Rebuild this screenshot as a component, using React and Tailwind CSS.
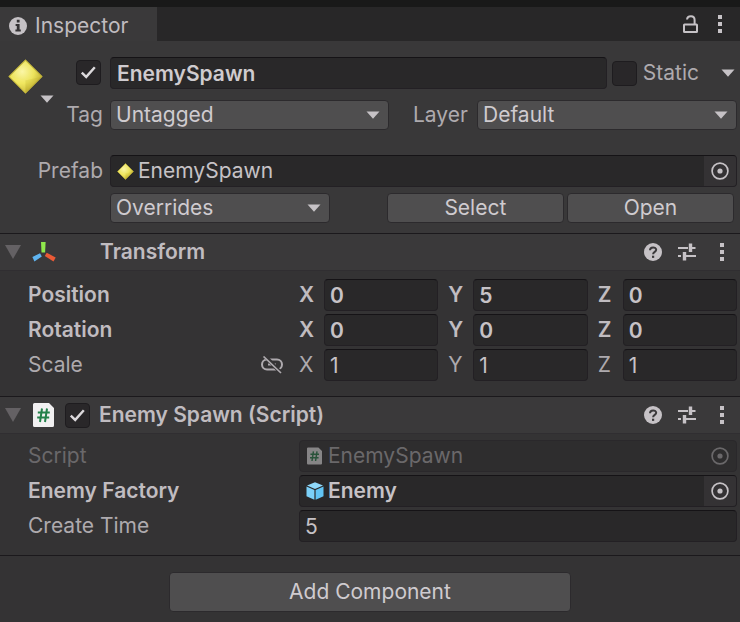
import { useId } from "react";

const fieldBox =
  "rounded-[4px] border border-[#232024] border-t-[#151316] bg-[#292829]";
const buttonBox = "rounded-[4px] border border-[#2c2a2d] bg-[#4f4e4f]";

function Caret({ className = "" }) {
  return (
    <svg viewBox="0 0 14 8" className={`h-2 w-3.5 shrink-0 ${className}`} aria-hidden="true">
      <path d="M0.5 0.5h13L7 7.8z" fill="#c6c2c6" />
    </svg>
  );
}

function CheckBox({ checked = false, label }) {
  return (
    <span className="grid size-[25px] shrink-0">
      <input
        type="checkbox"
        defaultChecked={checked}
        aria-label={label}
        className="peer col-start-1 row-start-1 size-[25px] appearance-none rounded-[4px] border border-[#1e1c1f] bg-[#292729]"
      />
      <svg
        viewBox="0 0 25 25"
        className="pointer-events-none invisible col-start-1 row-start-1 size-[25px] peer-checked:visible"
        aria-hidden="true"
      >
        <path d="M5.8 12.6l4.4 4.3L18.8 7.2" fill="none" stroke="#dcd9dc" strokeWidth="2.4" />
      </svg>
    </span>
  );
}

function Dropdown({ id, value, label, className = "" }) {
  return (
    <span className={`grid h-[30px] items-center ${className}`}>
      <select
        id={id}
        aria-label={label}
        className={`${buttonBox} col-start-1 row-start-1 h-[30px] w-full appearance-none pr-8 pl-[5px] text-[#cfcbcf]`}
      >
        <option>{value}</option>
      </select>
      <Caret className="pointer-events-none col-start-1 row-start-1 mr-[9px] justify-self-end" />
    </span>
  );
}

function Target() {
  return (
    <svg viewBox="0 0 18 18" className="size-[18px]" aria-hidden="true">
      <circle cx="9" cy="9" r="7.9" fill="none" stroke="currentColor" strokeWidth="1.7" />
      <circle cx="9" cy="9" r="2.6" fill="currentColor" />
    </svg>
  );
}

function ObjectField({ id, value, icon, bold = false, disabled = false }) {
  return (
    <div
      className={`flex h-8 min-w-0 flex-1 items-center rounded-[4px] border ${
        disabled
          ? "border-[#2a282b] bg-[#2e2d2e] text-[#6a686a]"
          : "border-[#232024] border-t-[#151316] bg-[#292829] text-[#c6c2c6]"
      }`}
    >
      {icon}
      <input
        id={id}
        readOnly
        disabled={disabled}
        value={value}
        className={`min-w-0 flex-1 bg-transparent pl-1 outline-none ${bold ? "font-semibold" : ""}`}
      />
      <button
        type="button"
        disabled={disabled}
        aria-label="Select object"
        className={`grid h-full w-8 place-items-center rounded-r-[3px] ${disabled ? "" : "bg-[#343234]"}`}
      >
        <Target />
      </button>
    </div>
  );
}

function Diamond({ className }) {
  const id = useId();
  return (
    <svg viewBox="0 0 34 34" className={className} aria-hidden="true">
      <defs>
        <radialGradient id={id} cx="0.4" cy="0.35" r="0.65">
          <stop offset="0" stopColor="#fbf6a6" />
          <stop offset="0.55" stopColor="#ece35c" />
          <stop offset="1" stopColor="#bfae30" />
        </radialGradient>
      </defs>
      <path d="M17 1L33 17L17 33L1 17z" fill={`url(#${id})`} stroke="#c7b93b" strokeWidth="1" />
      <path d="M1 17L17 21L17 33z" fill="#fff46c" opacity="0.25" />
      <path d="M17 21L33 17L17 33z" fill="#b5a31c" opacity="0.15" />
    </svg>
  );
}

function ScriptIcon({ className }) {
  return (
    <svg viewBox="0 0 21 24" className={className} aria-hidden="true">
      <path d="M1.5 0H16l5 5v17.5a1.5 1.5 0 0 1-1.5 1.5h-18A1.5 1.5 0 0 1 0 22.5v-21A1.5 1.5 0 0 1 1.5 0z" fill="#f1f0f1" />
      <path d="M9 5.5L7 19M14 5.5L12 19M4.800 9.5h12M4.200 14.500h12" fill="none" stroke="#23814a" strokeWidth="2" />
    </svg>
  );
}

function Cube() {
  return (
    <svg viewBox="0 0 18 18" className="ml-1.5 size-[18px] shrink-0" aria-hidden="true">
      <path d="M9 0.2L17 3.5L9 7L1 3.5z" fill="#8fd8fa" />
      <path d="M0.5 4.6L8.4 8.1V17.8L0.5 14.2z" fill="#7bd0f8" />
      <path d="M17.5 4.6L9.6 8.1V17.8L17.5 14.2z" fill="#62c4f4" />
    </svg>
  );
}

function Axes() {
  return (
    <svg viewBox="0 0 24 22" className="h-[22px] w-6 shrink-0" aria-hidden="true">
      <path d="M9 1h4.6l-.5 10.500h-3.600z" fill="#8fe84c" />
      <path d="M9.8 15.400L8 12.200L0.400 16l2 4.400z" fill="#5fb4f0" />
      <path d="M12.800 15l1.900-3.200L23.700 16.400l-2.200 4.200z" fill="#ea5a36" />
    </svg>
  );
}

function Dots() {
  return (
    <svg viewBox="0 0 4 18" className="h-[18px] w-1" aria-hidden="true">
      <path d="M0 0h4v4H0zM0 7h4v4H0zM0 14h4v4H0z" fill="#c6c2c6" />
    </svg>
  );
}

function HeaderTools() {
  return (
    <div className="ml-auto flex items-center pr-4">
      <button type="button" aria-label="Help" className="mr-4">
        <svg viewBox="0 0 18 18" className="size-[18px]" aria-hidden="true">
          <circle cx="9" cy="9" r="9" fill="#c6c2c6" />
          <path d="M6 7.2C6 3.5 12.2 3.6 12.2 6.8C12.2 8.9 9.1 8.8 9.1 11.2" fill="none" stroke="#3b393b" strokeWidth="2" />
          <path d="M8 12.7h2.2v2.2H8z" fill="#3b393b" />
        </svg>
      </button>
      <button type="button" aria-label="Presets" className="mr-6">
        <svg viewBox="0 0 18 18" className="size-[18px]" aria-hidden="true">
          <path d="M0 5h10M13 5h4.500M0 13h3M8 13h10" stroke="#c6c2c6" strokeWidth="2" />
          <path d="M12.500 0.5v8.500M6.500 9v8.500" stroke="#c6c2c6" strokeWidth="3.400" />
        </svg>
      </button>
      <button type="button" aria-label="More options">
        <Dots />
      </button>
    </div>
  );
}

function Foldout({ label }) {
  return (
    <button type="button" aria-label={label} className="ml-[5px] w-[27px] shrink-0">
      <svg viewBox="0 0 16 14" className="h-3.5 w-4" aria-hidden="true">
        <path d="M0 0h16L8 14z" fill="#646164" />
      </svg>
    </button>
  );
}

function VectorRow({ name, values, bold = false, link = false }) {
  return (
    <div
      role="group"
      aria-label={name}
      className={`flex h-8 items-center ${bold ? "font-semibold" : "text-[#aeaaae]"}`}
    >
      <div className="flex w-[271px] shrink-0 items-center justify-between pr-4">
        <span>{name}</span>
        {link && (
          <svg viewBox="0 0 22 18" className="h-[18px] w-[22px]" aria-hidden="true">
            <rect x="1" y="3.5" width="20" height="10" rx="5" fill="none" stroke="#aeaaae" strokeWidth="2" />
            <path d="M7 8.500h8" stroke="#aeaaae" strokeWidth="2" />
            <path d="M4.5 0.5L20 17" stroke="#343334" strokeWidth="4" />
            <path d="M2.5 0.5L20 17" stroke="#aeaaae" strokeWidth="1.7" />
          </svg>
        )}
      </div>
      <div className="grid flex-1 grid-cols-3 gap-2.5">
        {["X", "Y", "Z"].map((axis, i) => (
          <label key={axis} className="flex items-center">
            <span className="w-[25px] shrink-0">{axis}</span>
            <input
              defaultValue={values[i]}
              className={`${fieldBox} h-8 w-full min-w-0 pl-[5px] text-[#c6c2c6]`}
            />
          </label>
        ))}
      </div>
    </div>
  );
}

export default function App() {
  return (
    <div className="flex min-h-screen flex-col bg-[#343334] font-[Inter,'Liberation_Sans',sans-serif] text-[21px] leading-6 text-[#c0bcc0]">
      <div className="h-[7px] bg-[#191919]" />
      <header className="flex h-[34px] items-center bg-[#282728]">
        <h1 className="flex h-full w-[157px] items-center gap-2 bg-[#3a393a] pt-1 pl-[9px]">
          <svg viewBox="0 0 18 18" className="size-[18px]" aria-hidden="true">
            <circle cx="9" cy="9" r="9" fill="#c6c2c6" />
            <path d="M7.8 2.8h2.8v2.6H7.8zM6.6 7h4v5.6h1.2v2H6.4v-2h1.4V9H6.600z" fill="#343234" />
          </svg>
          Inspector
        </h1>
        <div className="ml-auto flex items-center gap-5 pr-[18px]">
          <button type="button" aria-label="Lock">
            <svg viewBox="0 0 15 18" className="h-[18px] w-[15px]" aria-hidden="true">
              <rect x="1" y="9.500" width="13" height="7.500" rx="0.5" fill="none" stroke="#c6c2c6" strokeWidth="2" />
              <path d="M4 4.5C4.5 0.2 11.6 0 11.6 5V9" fill="none" stroke="#c6c2c6" strokeWidth="2" />
            </svg>
          </button>
          <button type="button" aria-label="More options">
            <Dots />
          </button>
        </div>
      </header>

      <section className="flex bg-[#393839] pt-4 pb-2.5">
        <div className="flex w-[110px] shrink-0 flex-col">
          <div className="flex h-8 justify-between pr-[9px]">
            <div className="ml-2 flex pt-0.5">
              <Diamond className="size-[35px]" />
            </div>
            <div className="pt-[3px]">
              <CheckBox checked label="Active" />
            </div>
          </div>
          <div className="mt-2.5 flex h-8 items-center justify-between pr-[7px]">
            <Caret className="mb-8 ml-10" />
            <label htmlFor="tag" className="text-[#aeaaae]">Tag</label>
          </div>
          <label htmlFor="prefab" className="mt-6 flex h-8 items-center self-end pr-[7px] text-[#aeaaae]">
            Prefab
          </label>
        </div>
        <div className="flex min-w-0 flex-1 flex-col pr-[3px]">
          <div className="flex h-8 items-center pr-0.5">
            <input
              aria-label="Name"
              defaultValue="EnemySpawn"
              className={`${fieldBox} h-8 min-w-0 flex-1 pl-1.5 font-semibold text-[#cfcbcf]`}
            />
            <label className="ml-[5px] flex items-center gap-1.5 text-[#aeaaae]">
              <CheckBox label="Static" />
              <span>Static</span>
            </label>
            <button type="button" aria-label="Static flags" className="ml-[22px]">
              <Caret />
            </button>
          </div>
          <div className="mt-2.5 flex h-8 items-center">
            <Dropdown id="tag" value="Untagged" className="flex-[279]" />
            <label htmlFor="layer" className="ml-6 w-[64px] shrink-0 text-[#aeaaae]">Layer</label>
            <Dropdown id="layer" value="Default" className="flex-[260]" />
          </div>
          <div className="mt-6 flex">
            <ObjectField id="prefab" value="EnemySpawn" icon={<Diamond className="ml-1.5 size-[17px] shrink-0" />} />
          </div>
          <div className="mt-1.5 flex h-[30px] pr-[3px]">
            <Dropdown label="Overrides" value="Overrides" className="flex-[221]" />
            <button type="button" className={`${buttonBox} ml-[57px] flex-[176] text-[#cfcbcf]`}>Select</button>
            <button type="button" className={`${buttonBox} ml-[3px] flex-[166] text-[#cfcbcf]`}>Open</button>
          </div>
        </div>
      </section>

      <section>
        <header className="flex h-[38px] items-center border-y border-t-[#1b191c] border-b-[#302e31] bg-[#3a393a]">
          <Foldout label="Collapse Transform" />
          <div className="w-[68px] shrink-0">
            <Axes />
          </div>
          <h2 className="font-semibold">Transform</h2>
          <HeaderTools />
        </header>
        <div className="flex flex-col gap-[3px] pt-2 pr-[3px] pb-[15px] pl-7">
          <VectorRow name="Position" values={["0", "5", "0"]} bold />
          <VectorRow name="Rotation" values={["0", "0", "0"]} bold />
          <VectorRow name="Scale" values={["1", "1", "1"]} link />
        </div>
      </section>

      <section className="border-b border-[#1b191c]">
        <header className="flex h-[38px] items-center border-y border-t-[#1b191c] border-b-[#302e31] bg-[#3a393a]">
          <Foldout label="Collapse Enemy Spawn" />
          <ScriptIcon className="mr-[11px] ml-px h-6 w-[21px] shrink-0" />
          <CheckBox checked label="Enabled" />
          <h2 className="ml-[9px] font-semibold">Enemy Spawn (Script)</h2>
          <HeaderTools />
        </header>
        <div className="flex flex-col gap-[3px] pt-1.5 pr-[3px] pb-[13px] pl-7">
          <div className="flex items-center">
            <label htmlFor="script" className="w-[271px] text-[#6a686a]">Script</label>
            <ObjectField
              id="script"
              value="EnemySpawn"
              disabled
              icon={<ScriptIcon className="mr-0.5 ml-[7px] h-[18px] w-[15px] shrink-0 opacity-45" />}
            />
          </div>
          <div className="flex items-center">
            <label htmlFor="factory" className="w-[271px] font-semibold">Enemy Factory</label>
            <ObjectField id="factory" value="Enemy" bold icon={<Cube />} />
          </div>
          <div className="flex items-center">
            <label htmlFor="create-time" className="w-[271px] text-[#aeaaae]">Create Time</label>
            <input
              id="create-time"
              defaultValue="5"
              className={`${fieldBox} h-8 min-w-0 flex-1 pl-[5px] text-[#c6c2c6]`}
            />
          </div>
        </div>
      </section>

      <div className="flex justify-center pt-4">
        <button type="button" className={`${buttonBox} h-10 w-[402px] text-[#cfcbcf]`}>Add Component</button>
      </div>
    </div>
  );
}
